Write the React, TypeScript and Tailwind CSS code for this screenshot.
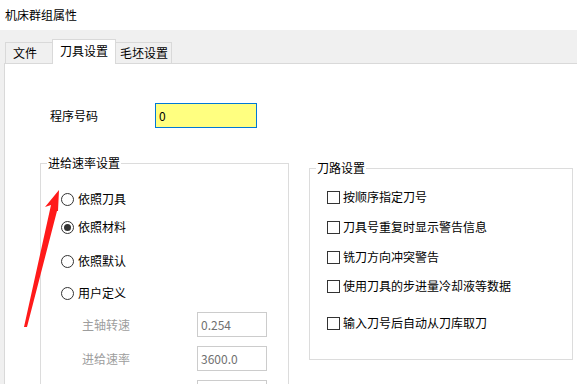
import React from 'react';

const font = { fontFamily: '"Noto Sans CJK SC", "Noto Sans", sans-serif' };

const Radio: React.FC<{ label: string; checked?: boolean; className?: string }> = ({ label, checked, className }) => (
  <div className={`flex items-center h-[24px] pl-[20px] ${className ?? ''}`}>
    <span className="w-[13px] h-[13px] rounded-full border border-[#333333] bg-white flex items-center justify-center">
      {checked && <span className="w-[7px] h-[7px] rounded-full bg-[#333333]" />}
    </span>
    <span className="ml-[4px] text-[12px] text-black">{label}</span>
  </div>
);

const Check: React.FC<{ label: string; className?: string }> = ({ label, className }) => (
  <div className={`flex items-center h-[20px] pl-[17px] ${className ?? ''}`}>
    <span className="w-[13px] h-[13px] border border-[#333333] bg-white" />
    <span className="ml-[3px] text-[12px] text-black">{label}</span>
  </div>
);

const DisabledField: React.FC<{ label: string; value: string; className?: string }> = ({ label, value, className }) => (
  <div className={`flex items-center h-[25px] pl-[41px] ${className ?? ''}`}>
    <span className="w-[115px] text-[12px] text-[#9d9d9d]">{label}</span>
    <div className="w-[70px] h-[25px] border border-[#cccccc] flex items-center pl-[3px] text-[12px] text-[#707070]">
      {value}
    </div>
  </div>
);

const Group: React.FC<{ title: string; className?: string; children: React.ReactNode }> = ({ title, className, children }) => (
  <div className={`relative border border-[#dcdcdc] ${className ?? ''}`}>
    <span className="absolute left-[6px] -top-[9px] px-[1px] bg-white text-[12px] leading-[16px] text-black">{title}</span>
    {children}
  </div>
);

export default function App() {
  return (
    <div className="relative w-[577px] h-[384px] overflow-hidden bg-white flex flex-col" style={font}>
      <div className="h-[30px] shrink-0 flex items-center pl-[5px] text-[12px] text-black">机床群组属性</div>

      <div className="flex-1 flex flex-col bg-[#f0f0f0] pl-[4px]">
        {/* tabs */}
        <div className="h-[33px] shrink-0 flex items-end pl-[1px] text-[12px] text-black">
          <div className="w-[47px] h-[21px] border-t border-l border-[#d9d9d9] flex items-center pl-[7px]">文件</div>
          <div className="relative z-10 w-[64px] h-[25px] -mb-px bg-white border-t border-l border-r border-[#d9d9d9] flex items-center pl-[7px] pb-[2px]">
            刀具设置
          </div>
          <div className="w-[56px] h-[21px] border-t border-r border-[#d9d9d9] flex items-center pl-[4px]">毛坯设置</div>
        </div>

        {/* tab panel */}
        <div className="flex-1 bg-white border-t border-l border-[#d9d9d9]">
          <div className="mt-[39px] h-[25px] flex items-center pl-[45px]">
            <span className="w-[105px] text-[12px] text-black">程序号码</span>
            <div className="w-[102px] h-[25px] border border-[#0078d7] bg-[#ffff80] flex items-center pl-[3px] text-[12px] text-black">
              0
            </div>
          </div>

          <div className="flex items-start mt-[35px]">
            <Group title="进给速率设置" className="ml-[35px] w-[249px] h-[260px]">
              <Radio label="依照刀具" className="mt-[23px]" />
              <Radio label="依照材料" checked className="mt-[4px]" />
              <Radio label="依照默认" className="mt-[10px]" />
              <Radio label="用户定义" className="mt-[8px]" />
              <DisabledField label="主轴转速" value="0.254" className="mt-[7px]" />
              <DisabledField label="进给速率" value="3600.0" className="mt-[9px]" />
              <div className="mt-[9px] h-[25px] pl-[156px]">
                <div className="w-[70px] h-[25px] border border-[#cccccc]" />
              </div>
            </Group>

            <div className="ml-[20px] mt-[5px] flex flex-col">
              <Group title="刀路设置" className="w-[264px] h-[192px]">
                <Check label="按顺序指定刀号" className="mt-[18px]" />
                <Check label="刀具号重复时显示警告信息" className="mt-[10px]" />
                <Check label="铣刀方向冲突警告" className="mt-[10px]" />
                <Check label="使用刀具的步进量冷却液等数据" className="mt-[9px]" />
                <Check label="输入刀号后自动从刀库取刀" className="mt-[17px]" />
              </Group>
              <Group title="冷却设置" className="mt-[32px] w-[258px] h-[80px] ml-[6px]">
                <div />
              </Group>
            </div>
          </div>
        </div>
      </div>

      {/* red annotation arrow */}
      <svg className="absolute left-0 top-0 pointer-events-none" width="577" height="384" viewBox="0 0 577 384">
        <polygon points="59,190 45,207 51,205 24,327 27,327 57,211 58,211" fill="#ff1a1a" />
      </svg>
    </div>
  );
}
